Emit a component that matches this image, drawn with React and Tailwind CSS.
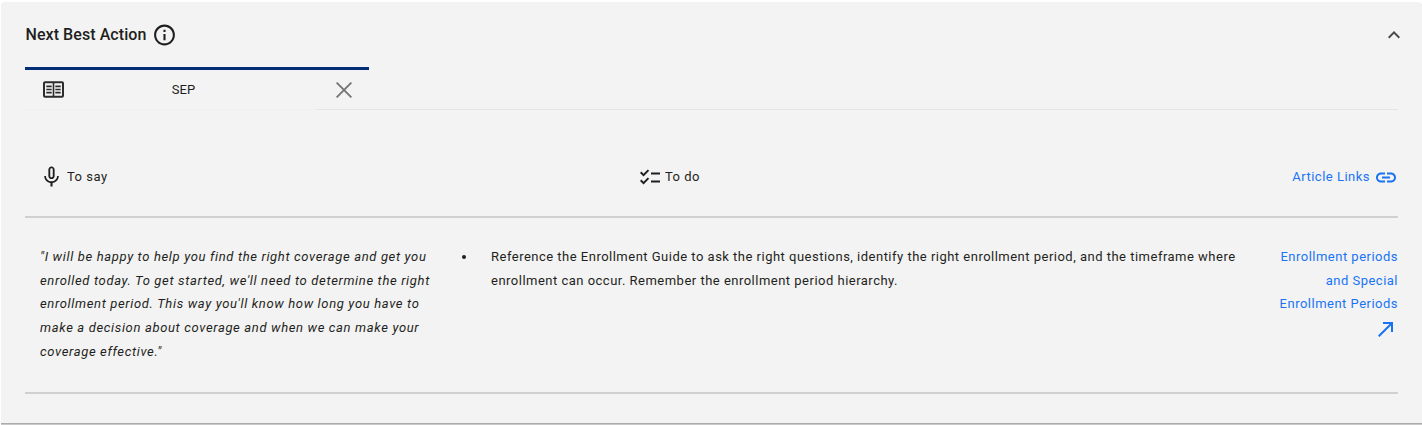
import React, { useState } from "react";
import {
  MdInfoOutline,
  MdKeyboardArrowUp,
  MdMicNone,
  MdChecklist,
  MdLink,
  MdCallMade,
} from "react-icons/md";

const ReaderIcon = () => (
  <svg width="21" height="17" viewBox="0 0 21 17" fill="none" stroke="#2c2c2e">
    <rect x="1" y="1.3" width="19" height="14.4" rx="1" strokeWidth="2" />
    <path d="M10.5 1.3v14.4" strokeWidth="1.6" />
    <path
      d="M3.3 5.3h5.4M3.3 8.5h5.4M3.3 11.7h5.4M12.3 5.3h5.4M12.3 8.5h5.4M12.3 11.7h5.4"
      strokeWidth="1.7"
    />
  </svg>
);

const CloseIcon = () => (
  <svg width="16" height="16" viewBox="0 0 16 16" fill="none" stroke="#757575">
    <path d="M.6.6l14.8 14.8M15.4.6L.6 15.4" strokeWidth="1.9" />
  </svg>
);

const App = () => {
  const [open, setOpen] = useState(true);
  const [showTab, setShowTab] = useState(true);

  return (
    <div className="w-[1422px] h-[425px] overflow-hidden bg-white pt-0.5 pl-px font-['Roboto',sans-serif] text-[#1f1f21]">
      <section className="h-[421px] rounded-t bg-[#f3f3f3] pl-6 pr-6 shadow-[0_1px_0_#ababab,0_2px_0_#c9c9c9]">
        <header className="flex h-[65px] items-center justify-between">
          <div className="flex items-center gap-[6px]">
            <h1 className="pl-[0.5px] text-base font-medium tracking-[0.07px]">
              Next Best Action
            </h1>
            <MdInfoOutline size={25} className="translate-y-[0.5px]" />
          </div>
          <button onClick={() => setOpen(!open)} className="-mr-2">
            <MdKeyboardArrowUp size={24} color="#49494d" />
          </button>
        </header>

        {open && (
          <div>
            <div className="flex h-[43px] border-b border-[#e4e4e4]">
              {showTab && (
                <div className="-mb-px flex h-[43px] w-[344px] items-stretch border-t-3 border-[#002d74] bg-[#f3f3f3]">
                  <div className="flex w-[292px] items-center border-b border-[#efefef] pl-[18px]">
                    <ReaderIcon />
                    <span className="w-[239px] text-center text-[13px]">SEP</span>
                  </div>
                  <button
                    onClick={() => setShowTab(false)}
                    className="flex flex-1 items-center border-b border-[#e4e4e4] pl-[19px]"
                  >
                    <CloseIcon />
                  </button>
                </div>
              )}
            </div>

            <div className="text-[13px] leading-[23.7px] tracking-[0.49px]">
              <div className="mt-[27px] flex h-[81px] items-center justify-between border-b-2 border-[#d0d0d0]">
                <div className="flex w-[600px] items-center gap-[3px] pl-[14px]">
                  <MdMicNone size={25} className="translate-y-[0.5px]" />
                  <span>To say</span>
                </div>
                <div className="flex flex-1 items-center gap-[3px] pl-[13px]">
                  <MdChecklist size={24} className="translate-y-[0.5px]" />
                  <span>To do</span>
                </div>
                <div className="flex items-center gap-1 text-[#1a73f5]">
                  <span>Article Links</span>
                  <MdLink size={24} className="translate-y-[0.5px]" />
                </div>
              </div>

              <div className="flex h-[176px] border-b-2 border-[#d0d0d0] pt-[27px]">
                <p className="w-[436px] pl-[15px] italic tracking-[0.65px]">
                  "I will be happy to help you find the right coverage and get you
                  <br />
                  enrolled today. To get started, we'll need to determine the right
                  <br />
                  enrollment period. This way you'll know how long you have to
                  <br />
                  make a decision about coverage and when we can make your
                  <br />
                  coverage effective."
                </p>
                <ul className="flex-1">
                  <li className="flex">
                    <span className="mt-[10px] mr-[25px] ml-px h-1 w-1 rounded-full bg-[#1f1f21]" />
                    <span>
                      Reference the Enrollment Guide to ask the right questions,
                      identify the right enrollment period, and the timeframe where
                      <br />
                      enrollment can occur. Remember the enrollment period hierarchy.
                    </span>
                  </li>
                </ul>
                <a className="flex w-[130px] flex-col items-end text-right text-[#1a73f5]">
                  <span>
                    Enrollment periods
                    <br />
                    and Special
                    <br />
                    Enrollment Periods
                  </span>
                  <MdCallMade size={24} className="mt-px" />
                </a>
              </div>
            </div>
          </div>
        )}
      </section>
    </div>
  );
};

export default App;
